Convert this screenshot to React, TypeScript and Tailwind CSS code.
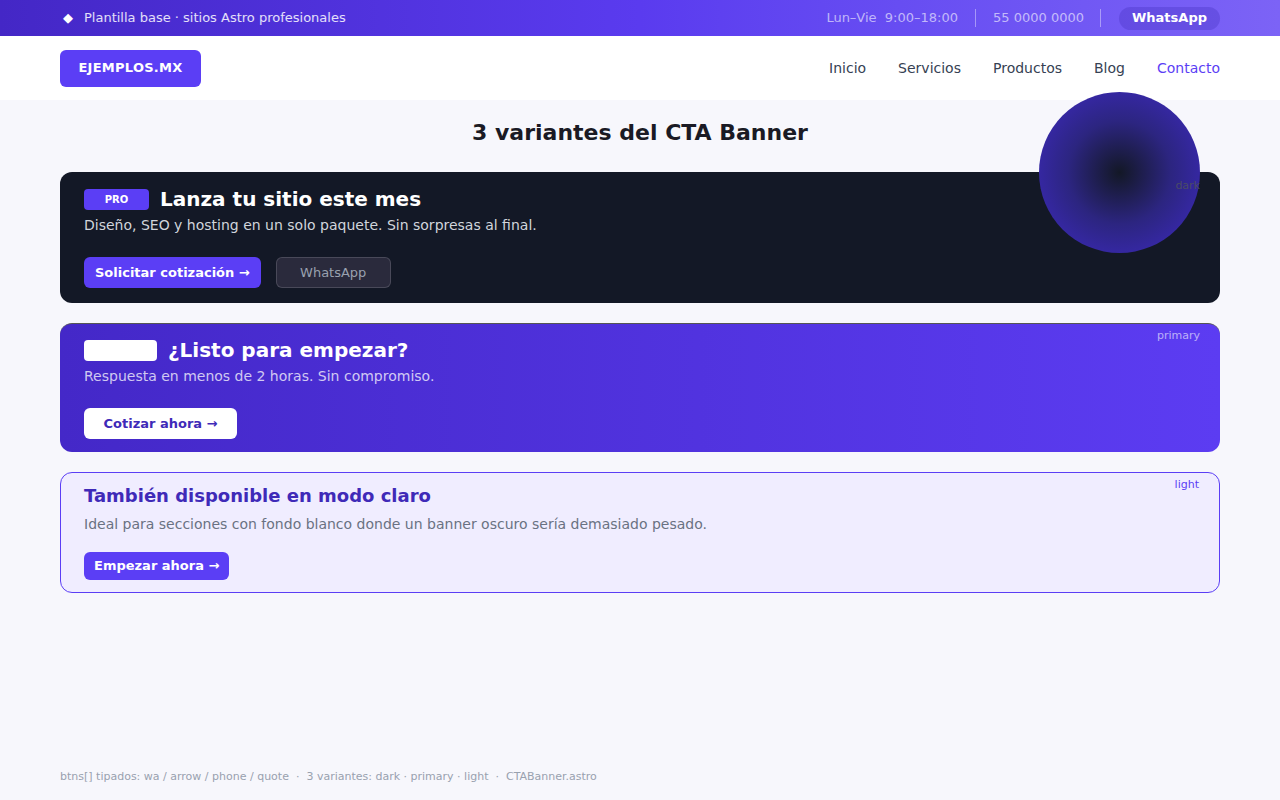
const font = { fontFamily: '"DejaVu Sans", "Liberation Sans", sans-serif' };

function TopBar() {
  return (
    <div className="h-9 bg-gradient-to-r from-[#4427c6] via-[#5a3bef] to-[#7c63f6] text-[13px]">
      <div className="mx-[60px] flex h-full items-center justify-between">
        <div className="flex items-center gap-[11px] pl-[3px] text-white/85">
          <span className="text-[13px] text-white">◆</span>
          <span>Plantilla base · sitios Astro profesionales</span>
        </div>
        <div className="flex items-center text-white/60">
          <span>Lun–Vie&nbsp;&nbsp;9:00–18:00</span>
          <span className="mx-[17px] h-[18px] w-px bg-white/40" />
          <span>55 0000 0000</span>
          <span className="ml-[16px] mr-[18px] h-[18px] w-px bg-white/40" />
          <span className="flex h-[23px] items-center rounded-full bg-[#3f2ab8]/30 px-[13px] font-bold text-white">
            WhatsApp
          </span>
        </div>
      </div>
    </div>
  );
}

function NavBar() {
  const links = ["Inicio", "Servicios", "Productos", "Blog"];
  return (
    <nav className="h-16 bg-white">
      <div className="mx-[60px] flex h-full items-center justify-between">
        <div className="flex h-[37px] w-[141px] items-center justify-center rounded-md bg-[#5b3ef5] text-[13px] font-bold tracking-[0.02em] text-white">
          EJEMPLOS.MX
        </div>
        <div className="flex items-center gap-8 text-sm text-gray-700">
          {links.map((l) => (
            <span key={l}>{l}</span>
          ))}
          <span className="text-[#5b3ef5]">Contacto</span>
        </div>
      </div>
    </nav>
  );
}

export default function App() {
  return (
    <div className="min-h-[800px] bg-[#f7f7fc]" style={font}>
      <TopBar />
      <NavBar />
      <main className="mx-[60px] flex flex-col">
        <h1 className="mt-[19px] text-center text-[22px] font-bold leading-7 text-[#1a1a24]">
          3 variantes del CTA Banner
        </h1>

        {/* dark */}
        <section className="relative mt-[25px] rounded-xl bg-[#131826] px-6 pb-[15px] pt-[13px]">
          <div className="pointer-events-none absolute -top-20 right-5 h-[161px] w-[161px] rounded-full bg-[radial-gradient(circle,#131826_0%,#2c2580_45%,#3f2ac6_100%)]" />
          <span className="absolute right-5 top-[6px] text-[11px] text-[#4b4b66]">dark</span>
          <div className="relative flex items-center gap-[11px]">
            <span className="flex h-[21px] w-[65px] items-center justify-center rounded bg-[#5b3ef5] text-[10px] font-bold text-white">
              PRO
            </span>
            <h2 className="text-xl font-bold leading-7 text-white">Lanza tu sitio este mes</h2>
          </div>
          <p className="relative mt-[2px] text-sm leading-5 text-gray-300">
            Diseño, SEO y hosting en un solo paquete. Sin sorpresas al final.
          </p>
          <div className="relative mt-[22px] flex gap-[15px]">
            <span className="flex h-[31px] items-center rounded-md bg-[#5b3ef5] px-[11px] text-[13px] font-bold text-white">
              Solicitar cotización →
            </span>
            <span className="flex h-[31px] w-[115px] items-center justify-center rounded-md border border-white/15 bg-[#2a2a3c] text-[13px] text-gray-400">
              WhatsApp
            </span>
          </div>
        </section>

        {/* primary */}
        <section className="relative mt-5 rounded-xl border-t border-[#555] bg-gradient-to-r from-[#4428c8] to-[#5c3cf2] px-6 pb-[13px] pt-[12px]">
          <span className="absolute right-5 top-[4px] text-[11px] text-white/60">primary</span>
          <div className="flex items-center gap-[11px]">
            <span className="h-[21px] w-[73px] rounded bg-white" />
            <h2 className="text-xl font-bold leading-7 text-white">¿Listo para empezar?</h2>
          </div>
          <p className="mt-[2px] text-sm leading-5 text-white/75">
            Respuesta en menos de 2 horas. Sin compromiso.
          </p>
          <div className="mt-[22px] flex">
            <span className="flex h-[31px] w-[153px] items-center justify-center rounded-md bg-white text-[13px] font-bold text-[#3f2ab8]">
              Cotizar ahora →
            </span>
          </div>
        </section>

        {/* light */}
        <section className="relative mt-5 rounded-xl border border-[#5b3ef5] bg-[#f0edff] px-[23px] pb-[12px] pt-[9px]">
          <span className="absolute right-5 top-[4px] text-[11px] text-[#5b3ef5]">light</span>
          <h2 className="text-lg font-bold leading-7 text-[#3f2ab8]">También disponible en modo claro</h2>
          <p className="mt-1 text-sm leading-5 text-gray-500">
            Ideal para secciones con fondo blanco donde un banner oscuro sería demasiado pesado.
          </p>
          <div className="mt-[18px] flex">
            <span className="flex h-[28px] items-center rounded-md bg-[#5b3ef5] px-[10px] text-[13px] font-bold text-white">
              Empezar ahora →
            </span>
          </div>
        </section>

        <footer className="mt-[176px] text-[11px] text-gray-400">
          btns[] tipados: wa / arrow / phone / quote &nbsp;·&nbsp; 3 variantes: dark · primary · light &nbsp;·&nbsp; CTABanner.astro
        </footer>
      </main>
    </div>
  );
}
